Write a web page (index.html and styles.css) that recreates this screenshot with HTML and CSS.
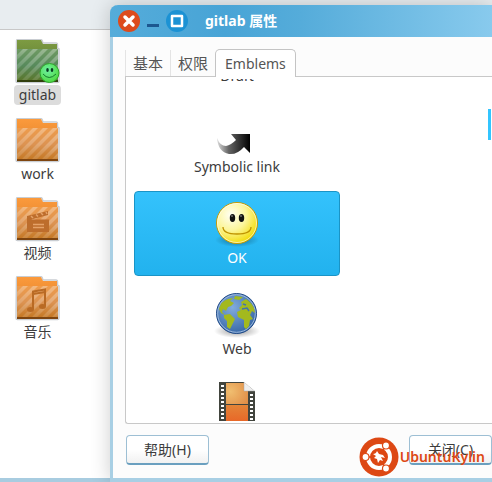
FILE: index.html
```html
<!DOCTYPE html>
<html lang="zh-CN">
<head>
  <meta charset="UTF-8" />
  <meta name="viewport" content="width=device-width, initial-scale=1.0" />
  <title>gitlab 属性</title>
  <link rel="stylesheet" href="styles.css">
</head>
<body>
  <svg class="defs" width="0" height="0" aria-hidden="true">
    <defs>
      <linearGradient id="orange-back" x1="0" y1="0" x2="0" y2="1">
        <stop offset="0" stop-color="#fb9a3c" />
        <stop offset="1" stop-color="#d97b25" />
      </linearGradient>
      <linearGradient id="orange-front" x1="0" y1="0" x2="0" y2="1">
        <stop offset="0" stop-color="#ee9c4c" />
        <stop offset="0.5" stop-color="#dc9352" />
        <stop offset="1" stop-color="#c2751f" />
      </linearGradient>
      <linearGradient id="green-back" x1="0" y1="0" x2="0" y2="1">
        <stop offset="0" stop-color="#7d9b42" />
        <stop offset="1" stop-color="#55742c" />
      </linearGradient>
      <linearGradient id="green-front" x1="0" y1="0" x2="0" y2="1">
        <stop offset="0" stop-color="#6f9a63" />
        <stop offset="0.5" stop-color="#578a5c" />
        <stop offset="1" stop-color="#5a7426" />
      </linearGradient>
      <linearGradient id="arrow-fill" x1="0" y1="0" x2="1" y2="0">
        <stop offset="0" stop-color="#ddd" />
        <stop offset="0.35" stop-color="#666" />
        <stop offset="1" stop-color="#000" />
      </linearGradient>
      <radialGradient id="face-fill" cx="0.35" cy="0.3" r="0.75">
        <stop offset="0" stop-color="#fffff4" />
        <stop offset="0.5" stop-color="#fcf69c" />
        <stop offset="1" stop-color="#f2da00" />
      </radialGradient>
      <radialGradient id="green-face" cx="0.4" cy="0.35" r="0.7">
        <stop offset="0" stop-color="#6df0a2" />
        <stop offset="1" stop-color="#4fd83c" />
      </radialGradient>
      <radialGradient id="sea" cx="0.4" cy="0.35" r="0.7">
        <stop offset="0" stop-color="#82abdd" />
        <stop offset="1" stop-color="#3465a4" />
      </radialGradient>
      <radialGradient id="soft-shadow">
        <stop offset="0" stop-color="#000" stop-opacity="0.4" />
        <stop offset="1" stop-color="#000" stop-opacity="0" />
      </radialGradient>
      <radialGradient id="film-top" cx="0.2" cy="0.4" r="0.9">
        <stop offset="0" stop-color="#f0be70" />
        <stop offset="1" stop-color="#e28f48" />
      </radialGradient>
      <linearGradient id="film-bottom" x1="0" y1="0" x2="0" y2="1">
        <stop offset="0" stop-color="#e48437" />
        <stop offset="1" stop-color="#ea5820" />
      </linearGradient>
      <linearGradient id="stripe-fade" x1="0" y1="0" x2="0" y2="1">
        <stop offset="0" stop-color="#fff" stop-opacity="0.3" />
        <stop offset="1" stop-color="#fff" stop-opacity="0.12" />
      </linearGradient>
      <g id="folder-edge">
        <path d="M1.500 2Q1.500 .5 3 .5H25Q27 .5 27.500 2.500L28 4H41Q42.500 4 42.500 6V9L44 10V42Q44 43.500 42.500 43.500H2.500Q1 43.500 1 42Z" fill="none" stroke="#c9cdd2" stroke-width="1.500" />
      </g>
      <g id="stripes" fill="url(#stripe-fade)">
        <path d="M2 16L8 10H13L2 21Z" />
        <path d="M2 26L18 10H23L2 31Z" />
        <path d="M2 36L28 10H33L2 41Z" />
        <path d="M7 41L38 10H43L12 41Z" />
        <path d="M17 41L43 15V20L22 41Z" />
        <path d="M27 41L43 25V30L32 41Z" />
        <path d="M37 41L43 35V40L42 41Z" />
      </g>
    </defs>
  </svg>

  <main class="files">
    <div class="files-toolbar"></div>
    <ul class="file-list">
      <li class="file selected">
        <svg class="file-icon" viewBox="0 0 46 46" aria-hidden="true">
          <use href="#folder-edge" />
          <path d="M2 1H26L28 5H42V40H2Z" fill="url(#green-back)" />
          <path d="M2 10H43V43H2Z" fill="url(#green-front)" />
          <use href="#stripes" />
          <path d="M2 41H43V43H2Z" fill="#33400f" />
          <circle cx="34.500" cy="34" r="9.500" fill="url(#green-face)" stroke="#2da52b" />
          <ellipse cx="32.500" cy="31" rx="1.300" ry="2" fill="#083d20" />
          <ellipse cx="37" cy="31" rx="1.300" ry="2" fill="#083d20" />
          <path d="M28 35Q34 42 41 35" fill="none" stroke="#157a2c" />
        </svg>
        <span class="file-name">gitlab</span>
      </li>
      <li class="file">
        <svg class="file-icon" viewBox="0 0 46 46" aria-hidden="true">
          <use href="#folder-edge" />
          <path d="M2 1H26L28 5H42V40H2Z" fill="url(#orange-back)" />
          <path d="M2 10H43V43H2Z" fill="url(#orange-front)" />
          <use href="#stripes" />
          <path d="M2 41H43V43H2Z" fill="#7f450f" />
        </svg>
        <span class="file-name">work</span>
      </li>
      <li class="file">
        <svg class="file-icon" viewBox="0 0 46 46" aria-hidden="true">
          <use href="#folder-edge" />
          <path d="M2 1H26L28 5H42V40H2Z" fill="url(#orange-back)" />
          <path d="M2 10H43V43H2Z" fill="url(#orange-front)" />
          <use href="#stripes" />
          <path d="M2 41H43V43H2Z" fill="#7f450f" />
          <path d="M12 19L33 14V18L16 22.500H34V35H12Z" fill="#bd6d2c" />
          <path d="M16 19l2 2M21 17.500l2 2M26 16l2 2M31 15l1 2M18 27.500H29M18 30.500H29" stroke="#e5a268" stroke-width="1.500" />
        </svg>
        <span class="file-name">视频</span>
      </li>
      <li class="file">
        <svg class="file-icon" viewBox="0 0 46 46" aria-hidden="true">
          <use href="#folder-edge" />
          <path d="M2 1H26L28 5H42V40H2Z" fill="url(#orange-back)" />
          <path d="M2 10H43V43H2Z" fill="url(#orange-front)" />
          <use href="#stripes" />
          <path d="M2 41H43V43H2Z" fill="#7f450f" />
          <path d="M18 33V15.500L30 13.500V30M18 18L30 16" fill="none" stroke="#b96a24" stroke-width="2" />
          <ellipse cx="15.500" cy="33.500" rx="3.500" ry="2.500" fill="#b96a24" />
          <ellipse cx="27.500" cy="30.500" rx="3.500" ry="2.500" fill="#b96a24" />
        </svg>
        <span class="file-name">音乐</span>
      </li>
    </ul>
  </main>

  <section class="dialog" role="dialog" aria-labelledby="dialog-title">
    <header class="titlebar">
      <button class="window-button close" aria-label="关闭窗口">
        <svg viewBox="0 0 22 22" aria-hidden="true"><path d="M7 7L15 15M15 7L7 15" stroke="#fff" stroke-width="3.500" stroke-linecap="round" /></svg>
      </button>
      <button class="window-button minimize" aria-label="最小化">
        <svg viewBox="0 0 12 22" aria-hidden="true"><path d="M0 14H12V17H0Z" fill="#1c5790" /></svg>
      </button>
      <button class="window-button maximize" aria-label="最大化">
        <svg viewBox="0 0 22 22" aria-hidden="true"><path d="M6 6H16V16H6Z" fill="none" stroke="#fff" stroke-width="2.500" stroke-linejoin="round" /></svg>
      </button>
      <h1 class="title" id="dialog-title">gitlab 属性</h1>
    </header>

    <div class="tabs" role="tablist">
      <button class="tab" role="tab">基本</button>
      <button class="tab" role="tab">权限</button>
      <button class="tab active" role="tab" aria-selected="true">Emblems</button>
    </div>

    <div class="panel" role="tabpanel">
      <ul class="emblems">
        <li class="emblem">
          <svg class="emblem-icon" viewBox="0 0 48 48" aria-hidden="true"></svg>
          <span>Draft</span>
        </li>
        <li class="emblem">
          <svg class="emblem-icon" viewBox="0 0 48 48" aria-hidden="true">
            <path d="M4 29Q7 37 13 37Q18 36 23 31L18 25H37V44L31 38Q24 46 16 45Q5 43 4 29Z" fill="url(#arrow-fill)" />
          </svg>
          <span>Symbolic link</span>
        </li>
        <li class="emblem chosen">
          <svg class="emblem-icon" viewBox="0 0 48 48" aria-hidden="true">
            <ellipse cx="24" cy="40" rx="22" ry="7" fill="url(#soft-shadow)" />
            <circle cx="24" cy="23" r="20.500" fill="url(#face-fill)" stroke="#c79a00" />
            <circle cx="24" cy="23" r="19.500" fill="none" stroke="#fff" opacity="0.6" />
            <ellipse cx="19.500" cy="18" rx="2.700" ry="4" fill="#111" />
            <ellipse cx="28.500" cy="18" rx="2.700" ry="4" fill="#111" />
            <circle cx="19" cy="16" r="0.800" fill="#aaa" />
            <circle cx="28" cy="16" r="0.800" fill="#aaa" />
            <path d="M10 27Q10 34 24 34Q38 34 38 27" fill="none" stroke="#bf9300" stroke-width="1.300" />
          </svg>
          <span>OK</span>
        </li>
        <li class="emblem">
          <svg class="emblem-icon" viewBox="0 0 48 48" aria-hidden="true">
            <ellipse cx="24" cy="40" rx="23" ry="7" fill="url(#soft-shadow)" />
            <circle cx="23.500" cy="22.500" r="20" fill="url(#sea)" stroke="#204a87" />
            <circle cx="23.500" cy="22.500" r="18.800" fill="none" stroke="#9db9dd" />
            <path d="M6 18Q8 10 15 8L20 7L17 10L21 12L18 15L15 16L13 20L10 18L9 21L12 24L8 22ZM22 5L30 6L26 9L21 8ZM11 24L17 23L22 28L20 32L17 38L14 36L14 30L11 27Z" fill="#a3b91e" />
            <path d="M26 17L29 14L28 11L33 8Q38 11 41 17L42 22L39 20L37 24L40 28L37 29L36 35L33 38L31 36L31 29L25 26L24 21L28 19Z" fill="#a3b91e" />
            <path d="M29 18L34 17L36 20M30 13L33 14" fill="none" stroke="#4372ae" stroke-width="1.500" />
          </svg>
          <span>Web</span>
        </li>
        <li class="emblem">
          <svg class="emblem-icon" viewBox="0 0 48 48" aria-hidden="true">
            <path d="M6 0H31L42 9V48H6Z" fill="#42453e" />
            <path d="M13 1H35V22H13Z" fill="url(#film-top)" />
            <path d="M13 23H35V48H13Z" fill="url(#film-bottom)" />
            <path d="M9.500 3V48M38.500 12V48" stroke="#fff" stroke-width="3" stroke-dasharray="2 2" />
            <path d="M31 0L42 9H31Z" fill="#eee" stroke="#aaa" stroke-width="0.500" />
            <path d="M31 0H42V9Z" fill="#fff" />
          </svg>
          <span>Sound</span>
        </li>
      </ul>
      <div class="next-column"></div>
    </div>

    <footer class="actions">
      <button class="action">帮助(H)</button>
      <button class="action">关闭(C)</button>
    </footer>
  </section>

  <div class="brand">
    <svg class="brand-logo" viewBox="0 0 40 40" aria-hidden="true">
      <circle cx="20" cy="20" r="19.500" fill="#dd4814" />
      <circle cx="20" cy="20" r="11" fill="none" stroke="#fff" stroke-width="4" />
      <path d="M20 20L6 20M20 20L27 8M20 20L27 32" stroke="#dd4814" stroke-width="1.500" />
      <g fill="#fff" stroke="#dd4814" stroke-width="1.200">
        <circle cx="6.500" cy="20" r="3.500" />
        <circle cx="27" cy="8.500" r="3.500" />
        <circle cx="27" cy="31.500" r="3.500" />
      </g>
      <circle cx="20" cy="20" r="8" fill="#dd4814" />
      <path d="M14 17Q17 17 18 14L20 17L24 18L26 21L22 20L24 24L21 23L19 26L18 22L15 21L17 19Z" fill="#fff" />
    </svg>
    <span class="brand-name">UbuntuKylin</span>
  </div>
</body>
</html>
```

FILE: styles.css
```css
* {
  box-sizing: border-box;
}
body {
  position: relative;
  margin: 0;
  min-height: 100vh;
  display: flex;
  overflow: hidden;
  font-family: "Noto Sans", "Noto Sans CJK SC", sans-serif;
  font-size: 14px;
  line-height: 20px;
  color: #3c3c3c;
  background: #fff;
}
button {
  padding: 0;
  font: inherit;
  color: inherit;
  cursor: pointer;
}
ul {
  margin: 0;
  padding: 0;
  list-style: none;
}
.defs {
  position: absolute;
}

/* file manager behind the dialog */
.files {
  flex: 1;
  border-bottom: 4px solid #a8cce0;
}
.files-toolbar {
  height: 30px;
  background: #e8edf0;
  border-bottom: 1px solid #c8c8c8;
}
.file-list {
  display: flex;
  flex-direction: column;
  gap: 13px;
  width: 75px;
  padding-top: 9px;
}
.file {
  display: flex;
  flex-direction: column;
  align-items: center;
}
.file-icon {
  width: 46px;
  height: 46px;
}
.file-name {
  padding: 0 5px;
  border-radius: 4px;
}
.file.selected .file-name {
  background: #dcdcdc;
}

/* properties dialog */
.dialog {
  position: absolute;
  top: 5px;
  right: 0;
  bottom: 0;
  left: 110px;
  display: flex;
  flex-direction: column;
  background: #fcfcfc;
  border: solid #a8cfe4;
  border-width: 0 0 4px 3px;
  border-radius: 8px 0 0 0;
  box-shadow: 0 0 20px rgba(0, 0, 0, 0.2);
}
.titlebar {
  display: flex;
  align-items: center;
  gap: 7px;
  height: 32px;
  margin-left: -3px;
  padding-left: 8px;
  border-radius: 8px 0 0 0;
  background: linear-gradient(to right, #55acda, #48a4d6 30%, #55acda 50%, #88caed);
}
.window-button {
  display: flex;
  width: 22px;
  height: 22px;
  border: none;
  border-radius: 50%;
  background: none;
}
.window-button.close {
  background: #dd4b1d;
}
.window-button.minimize {
  width: 12px;
}
.window-button.maximize {
  background: #1c92d4;
}
.title {
  margin: 0 0 0 10px;
  font-size: 14px;
  color: #fff;
}

.tabs {
  display: flex;
  align-items: flex-end;
  height: 39px;
  padding-left: 12px;
}
.tab {
  height: 26px;
  padding: 0 7px;
  border: none;
  border-left: 1px solid #e4e4e4;
  background: none;
  font-size: 15px;
  color: #555;
}
.tab.active {
  z-index: 1;
  height: 28px;
  margin-bottom: -1px;
  padding: 0 9px;
  border: 1px solid #c4c4c4;
  border-bottom: none;
  border-radius: 5px 5px 0 0;
  background: #fff;
  font-size: 14px;
}
.panel {
  flex: 1;
  display: flex;
  justify-content: space-between;
  min-height: 0;
  margin-left: 12px;
  padding: 2px 1px 2px 8px;
  border: 1px solid #c8c8c8;
  border-right: none;
  border-radius: 0 0 0 3px;
  background: #fff;
  overflow: clip;
  overflow-clip-margin: content-box;
}

/* scrolled down past the first emblems */
.emblems {
  display: flex;
  flex-direction: column;
  gap: 6px;
  width: 206px;
  margin-top: -70px;
}
.emblem {
  flex: none;
  display: flex;
  flex-direction: column;
  align-items: center;
  height: 85px;
  padding-top: 8px;
  border: 1px solid transparent;
}
.emblem-icon {
  width: 48px;
  height: 48px;
}
.emblem.chosen {
  border-color: #1a94c6;
  border-radius: 4px;
  background: linear-gradient(#34c2fc, #22b2ee);
  color: #fff;
}
.next-column {
  width: 3px;
  height: 31px;
  margin-top: 30px;
  background: #33c5ff;
}

.actions {
  display: flex;
  justify-content: space-between;
  padding: 11px 0 13px 13px;
}
.action {
  width: 83px;
  height: 30px;
  border: 1px solid #9dbfd4;
  border-bottom: 2px solid #6a9fbf;
  border-radius: 4px;
  background: linear-gradient(#fff 50%, #f1f1f1);
}

/* logo laid over the corner */
.brand {
  position: absolute;
  right: 7px;
  bottom: 5px;
  display: flex;
  align-items: center;
  gap: 1px;
  color: #dd4814;
}
.brand-logo {
  width: 40px;
  height: 40px;
}
.brand-name {
  font-weight: 600;
}
```
